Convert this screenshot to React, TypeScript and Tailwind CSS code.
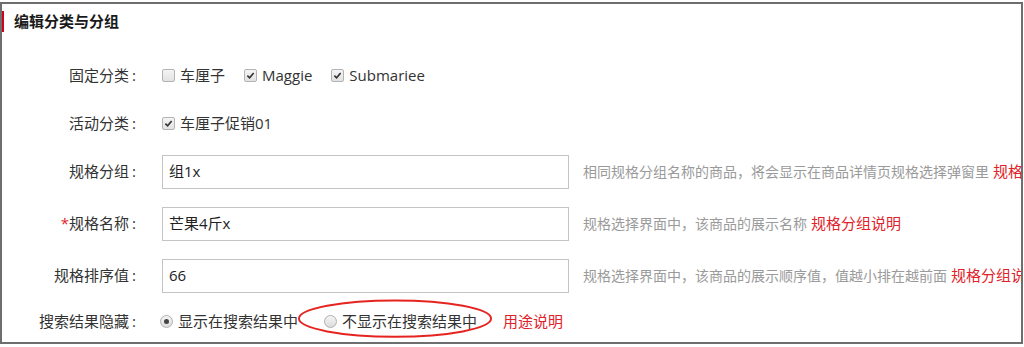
import React from "react";

const font = { fontFamily: '"Open Sans", "Noto Sans CJK SC", sans-serif' };

function Check({ checked }: { checked?: boolean }) {
  return (
    <span className="flex h-[13px] w-[13px] shrink-0 items-center justify-center rounded-[2px] border border-[#b3b3b3] bg-[linear-gradient(#f4f4f4,#e2e2e2)]">
      {checked && (
        <svg viewBox="0 0 10 10" className="h-[9px] w-[9px]">
          <path d="M1.5 5.2 L4 7.6 L8.5 2.2" fill="none" stroke="#333" strokeWidth="1.8" />
        </svg>
      )}
    </span>
  );
}

function Radio({ checked }: { checked?: boolean }) {
  return (
    <span className="flex h-[13px] w-[13px] shrink-0 items-center justify-center rounded-full border border-[#b0b0b0] bg-[linear-gradient(#f5f5f5,#dcdcdc)]">
      {checked && <span className="h-[5px] w-[5px] rounded-full bg-[#444]" />}
    </span>
  );
}

function Label({ text, required }: { text: string; required?: boolean }) {
  return (
    <div className="w-[134px] shrink-0 text-right">
      {required && <span className="text-[#e0222a]">*</span>}
      {text}
      <span className="ml-[3px]">:</span>
    </div>
  );
}

function InputRow({
  label,
  value,
  help,
  link,
  required,
  className,
}: {
  label: string;
  value: string;
  help: string;
  link: string;
  required?: boolean;
  className: string;
}) {
  return (
    <div className={`flex h-[34px] items-center whitespace-nowrap ${className}`}>
      <Label text={label} required={required} />
      <div className="ml-[26px] flex h-[34px] w-[407px] shrink-0 items-center border border-[#c4c4c4] pl-[6px] text-[#222]">
        {value}
      </div>
      <span className="ml-[14px] text-[14px] text-[#9a9a9a]">{help}</span>
      <span className="ml-[4px] text-[#e0222a]">{link}</span>
    </div>
  );
}

export default function App() {
  return (
    <div className="h-[347px] w-[1024px] bg-white pt-[2px]" style={font}>
      <div className="h-[342px] w-[1023px] overflow-hidden border-2 border-[#6e6e6e] text-[15px] text-[#333]">
        <div className="flex items-center pt-[6px]">
          <div className="-ml-[2px] h-[21px] w-[4px] bg-[#d0021b]" />
          <div className="ml-[10px] text-[15px] font-bold text-[#1a1a1a]">编辑分类与分组</div>
        </div>

        <div className="mt-[26px] flex h-[34px] items-center whitespace-nowrap">
          <Label text="固定分类" />
          <div className="ml-[26px] flex items-center gap-[19px]">
            <span className="flex items-center gap-[5px]">
              <Check />
              车厘子
            </span>
            <span className="flex items-center gap-[5px]">
              <Check checked />
              Maggie
            </span>
            <span className="flex items-center gap-[5px]">
              <Check checked />
              Submariee
            </span>
          </div>
        </div>

        <div className="mt-[14px] flex h-[34px] items-center whitespace-nowrap">
          <Label text="活动分类" />
          <span className="ml-[26px] flex items-center gap-[5px]">
            <Check checked />
            车厘子促销01
          </span>
        </div>

        <InputRow
          className="mt-[14px]"
          label="规格分组"
          value="组1x"
          help="相同规格分组名称的商品，将会显示在商品详情页规格选择弹窗里"
          link="规格分组说明"
        />
        <InputRow
          className="mt-[18px]"
          required
          label="规格名称"
          value="芒果4斤x"
          help="规格选择界面中，该商品的展示名称"
          link="规格分组说明"
        />
        <InputRow
          className="mt-[18px]"
          label="规格排序值"
          value="66"
          help="规格选择界面中，该商品的展示顺序值，值越小排在越前面"
          link="规格分组说明"
        />

        <div className="mt-[12px] flex h-[34px] items-center whitespace-nowrap">
          <Label text="搜索结果隐藏" />
          <div className="ml-[24px] flex items-center">
            <span className="flex items-center gap-[5px]">
              <Radio checked />
              显示在搜索结果中
            </span>
            <span className="relative ml-[26px] flex items-center gap-[5px]">
              <Radio />
              不显示在搜索结果中
              <svg
                className="pointer-events-none absolute -left-[27px] -right-[16px] -top-[11px] -bottom-[8px]"
                viewBox="0 0 200 40"
                preserveAspectRatio="none"
              >
                <ellipse cx="100" cy="20" rx="98" ry="18.5" fill="none" stroke="#e52420" strokeWidth="2" />
              </svg>
            </span>
            <span className="ml-[26px] text-[#e0222a]">用途说明</span>
          </div>
        </div>
      </div>
    </div>
  );
}
